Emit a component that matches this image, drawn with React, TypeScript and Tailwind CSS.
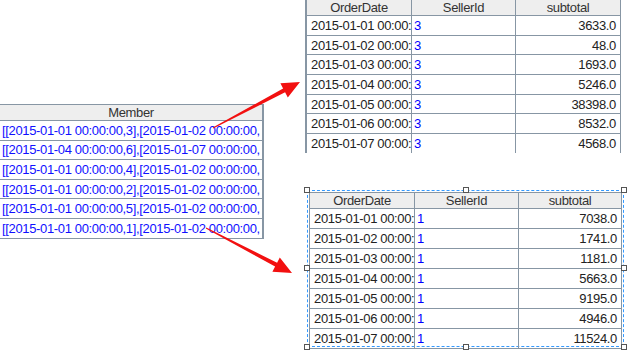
const font = "font-['Liberation_Sans',Arial,sans-serif] text-[13px] tracking-[-0.35px] leading-none";

const memberRows = [
  "[[2015-01-01 00:00:00,3],[2015-01-02 00:00:00,",
  "[[2015-01-04 00:00:00,6],[2015-01-07 00:00:00,",
  "[[2015-01-01 00:00:00,4],[2015-01-02 00:00:00,",
  "[[2015-01-01 00:00:00,2],[2015-01-02 00:00:00,",
  "[[2015-01-01 00:00:00,5],[2015-01-02 00:00:00,",
  "[[2015-01-01 00:00:00,1],[2015-01-02 00:00:00,",
];

const seller3 = ["3633.0", "48.0", "1693.0", "5246.0", "38398.0", "8532.0", "4568.0"];
const seller1 = ["7038.0", "1741.0", "1181.0", "5663.0", "9195.0", "4946.0", "11524.0"];

type OrderTableProps = {
  seller: string;
  totals: string[];
  rowH: string;
};

const OrderTable = ({ seller, totals, rowH }: OrderTableProps) => {
  return (
    <div className={font}>
      <div className="flex h-[16px] bg-[#eeeeee] border-b border-[#8796a4] text-[#333]">
        <div className="w-[105px] border-r border-[#8796a4] flex items-center justify-center">OrderDate</div>
        <div className="w-[104px] border-r border-[#8796a4] flex items-center justify-center">SellerId</div>
        <div className="flex-1 flex items-center justify-center">subtotal</div>
      </div>
      {totals.map((t, i) => (
        <div key={i} className={`flex ${rowH} border-b border-[#8796a4] text-[#222]`}>
          <div className="w-[105px] border-r border-[#8796a4] flex items-center pl-[4px] overflow-hidden whitespace-nowrap">
            2015-01-0{i + 1} 00:00:00
          </div>
          <div className="w-[104px] border-r border-[#8796a4] flex items-center pl-[2px] text-[#0000ff]">{seller}</div>
          <div className="flex-1 flex items-center justify-end pr-[4px]">{t}</div>
        </div>
      ))}
    </div>
  );
};

const Handle = ({ cls }: { cls: string }) => (
  <div className={`absolute w-[6px] h-[6px] bg-white border border-[#555] ${cls}`} />
);

export default function App() {
  return (
    <div className="relative w-[627px] h-[350px] bg-white overflow-hidden">
      {/* left member table */}
      <div className={`absolute left-0 top-[104px] w-[264px] border-t border-[#8796a4] border-r-2 ${font}`}>
        <div className="h-[16px] bg-[#eeeeee] border-b border-[#8796a4] flex items-center justify-center text-[#333]">
          Member
        </div>
        {memberRows.map((r, i) => (
          <div
            key={i}
            className="h-[19.6px] border-b border-[#8796a4] flex items-center pl-[2px] overflow-hidden whitespace-nowrap text-[#1010ff]"
          >
            {r}
          </div>
        ))}
      </div>

      {/* top right table */}
      <div className="absolute left-[305px] top-0 w-[316px] h-[153px] overflow-hidden border-l-2 border-r border-[#8796a4]">
        <OrderTable seller="3" totals={seller3} rowH="h-[19.7px]" />
      </div>

      {/* bottom right table, selected */}
      <div className="absolute left-[307px] top-[190px] w-[317px] h-[157px] border border-dashed border-[#3399ff] p-[1px]">
        <div className="border-l border-t border-r border-[#8796a4] -mb-[1px]">
          <OrderTable seller="1" totals={seller1} rowH="h-[20px]" />
        </div>
        <Handle cls="-left-[4px] -top-[4px]" />
        <Handle cls="left-[155px] -top-[4px]" />
        <Handle cls="-right-[4px] -top-[4px]" />
        <Handle cls="-left-[4px] top-[74px]" />
        <Handle cls="-right-[4px] top-[74px]" />
        <Handle cls="-left-[4px] -bottom-[4px]" />
        <Handle cls="left-[155px] -bottom-[4px]" />
        <Handle cls="-right-[4px] -bottom-[4px]" />
      </div>

      {/* arrows */}
      <svg className="absolute inset-0 pointer-events-none" width="627" height="350" viewBox="0 0 627 350">
        <polygon
          fill="#f21010"
          points="212.8,127.6 283.1,88.5 280.4,83.3 300,82 287.8,97.5 285.1,92.3 213.2,128.4"
        />
        <polygon
          fill="#f21010"
          points="206.2,227.6 277.1,262.8 279.8,257.6 292,273 272.4,271.8 275.1,266.6 205.8,228.4"
        />
      </svg>
    </div>
  );
}
